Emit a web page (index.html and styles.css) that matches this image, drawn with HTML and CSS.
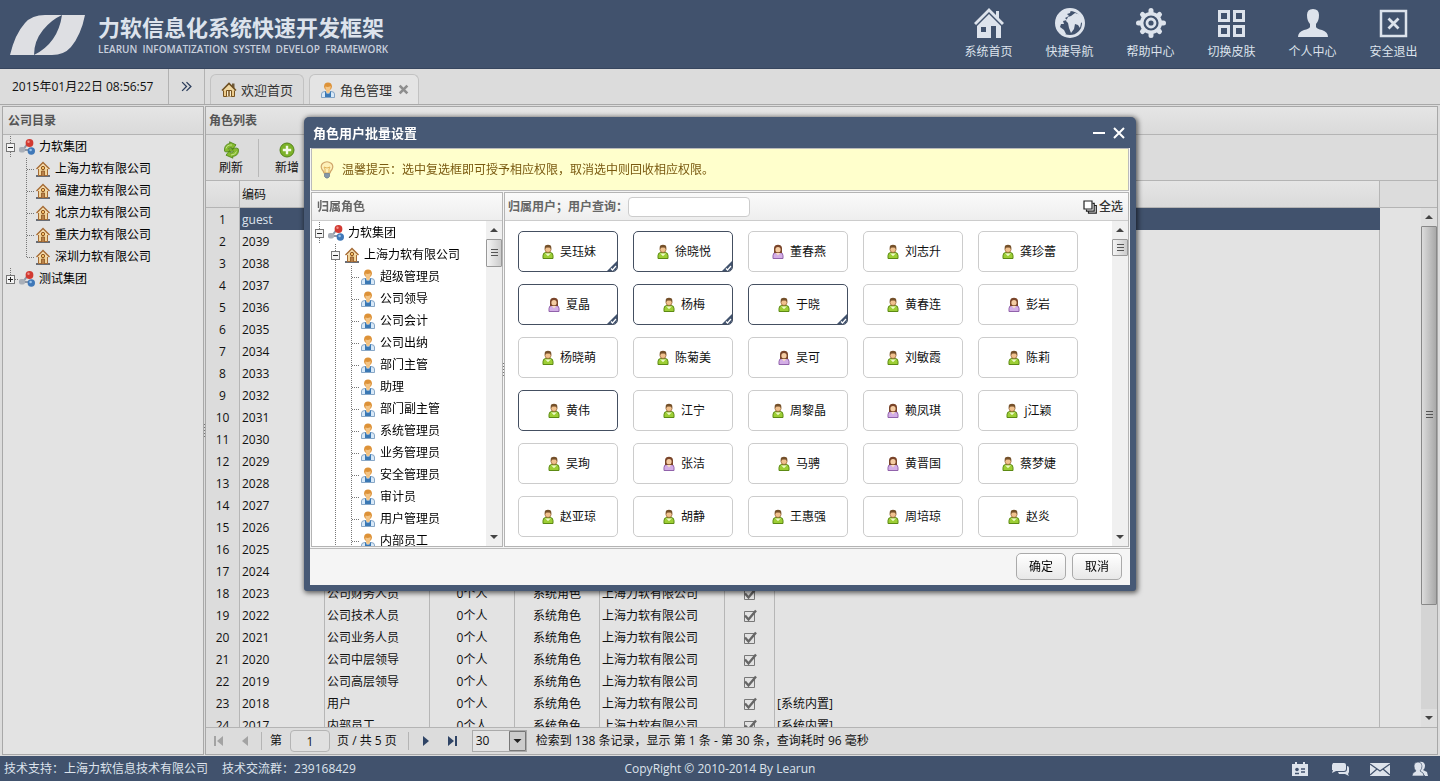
FILE: index.html
```
<!DOCTYPE html>
<html lang="zh-CN">
<head>
<meta charset="utf-8">
<title>力软信息化系统快速开发框架</title>
<link rel="stylesheet" href="styles.css">
</head>
<body>
<svg class="sprite" aria-hidden="true">
  <symbol id="i-group" viewBox="0 0 16 16"><path d="M4 11 9 4M4 11h8" stroke="#8d96a5" stroke-width="2"/><circle cx="10.500" cy="4" r="3.900" fill="#d23a32"/><circle cx="9.500" cy="2.800" r="1.200" fill="#f0928a"/><rect x="0" y="8" width="6" height="5.500" rx="2" fill="#a9afb8"/><circle cx="12.300" cy="12" r="3.700" fill="#3f78b8"/><circle cx="11.600" cy="11" r="1.300" fill="#9cc4ea"/></symbol>
  <symbol id="i-firm" viewBox="0 0 16 16"><path d="M1 15h14" stroke="#5b5f68" stroke-width="1.800"/><path d="M3.500 8v6.500h9V8" fill="#f2d49a" stroke="#a56b35"/><path d="M1.500 8 8 1.500 14.500 8" fill="#f6deb0" stroke="#a56b35" stroke-width="1.400"/><circle cx="8" cy="7" r="1.700" fill="#f6c067" stroke="#8c5420"/><path d="M6.500 14.500V10h3v4.500" fill="#b9824a" stroke="#8c5420" stroke-width=".8"/></symbol>
  <symbol id="i-home" viewBox="0 0 16 16"><path d="M11 1.500h2.500V7H11z" fill="#6e5a3a"/><path d="M2.500 8v6.500h11V8" fill="#eac98a" stroke="#77531f"/><path d="M1 8.500 8 1.500l7 7" fill="#f0d8a2" stroke="#6e4f22" stroke-width="1.600"/><path d="M5.500 14.500V8.500h5v6" fill="#f7ecd0" stroke="#77531f"/><path d="M8 9v5" stroke="#77531f" stroke-width="1.500"/></symbol>
  <symbol id="i-role" viewBox="0 0 16 16"><path d="M1.500 15.500V12Q1.500 9.500 5 9.500h6q3.500 0 3.500 2.500v3.500z" fill="#d8e9f8" stroke="#6d93ba" stroke-width=".8"/><path d="M5 9.500h1.500v2h3v-2H11v5.500H5z" fill="#3a78b4"/><path d="M6 7h4v3l-2 1.500L6 10z" fill="#f4c78a"/><circle cx="8" cy="4.300" r="3.900" fill="#dd9238"/><path d="M5.300 4.500q2.700 1 5.400-.5 0 4.500-2.700 4.500T5.300 4.500z" fill="#f4c586"/></symbol>
  <symbol id="i-man" viewBox="0 0 16 16"><path d="M3 14.500v-3Q3 8.500 6 8.500h4q3 0 3 3v3z" fill="#9dce35" stroke="#5c8a13"/><path d="M5.500 9.500 8 12l2.500-2.500" fill="#eef7ce" stroke="#d6ef96"/><circle cx="8" cy="5.500" r="3" fill="#f0c18e" stroke="#93602f" stroke-width=".7"/><path d="M4.700 5.500V3Q5 .8 8 .8t3.300 2.200v2.500L10 3.500H6z" fill="#74502a"/></symbol>
  <symbol id="i-woman" viewBox="0 0 16 16"><path d="M3 14.500v-3Q3 8.500 6 8.500h4q3 0 3 3v3z" fill="#d3aee6" stroke="#9162ab"/><path d="M4 9V4Q4.500.8 8 .8t4 3.200v5z" fill="#7a452a"/><circle cx="8" cy="5.700" r="2.600" fill="#f5cda3"/><path d="M5.800 9 8 11.500 10.200 9z" fill="#f7ddc5"/></symbol>
  <symbol id="i-refresh" viewBox="0 0 18 18"><path d="M2.500 8Q3 3 8 2.500L7.500.800l6.500 3L10.500 9 9.500 6.500Q7 6.500 6.500 8l8-1Q17 7 16.500 10 16 15 10.500 15.500l.5 1.700-7-3L7.500 9.500l1 2.500q2.500 0 3-2l-8 1Q2 10.500 2.500 8z" fill="#86ba30" stroke="#4e8418" stroke-width=".8"/><path d="M4 7.500q1-4 6-3.500M14.500 10.500q-1 3.500-5.500 3.500" fill="none" stroke="#c5e38a"/></symbol>
  <symbol id="i-add" viewBox="0 0 18 18"><circle cx="9" cy="9" r="7" fill="#7cb228" stroke="#54841a"/><path d="M9 4.800v8.400M4.800 9h8.400" stroke="#f4f8e8" stroke-width="2.400"/></symbol>
  <symbol id="i-bulb" viewBox="0 0 16 18"><path d="M5 12Q4.500 10 3 8.500 1.200 5 3.500 2.500 8-1 12.500 2.500 14.800 5 13 8.500 11.500 10 11 12z" fill="#fdf0b8" stroke="#cfa56a" stroke-width="1.200"/><path d="M6 12V8L5 6l3 1 3-1-1 2v4" fill="none" stroke="#e2b45c"/><path d="M5.500 12.500h5v3L9 17H7l-1.500-1.500z" fill="#8397a8" stroke="#68798a" stroke-width=".7"/></symbol>
  <symbol id="i-all" viewBox="0 0 14 14"><path d="M1 1h8v8H1z" fill="#fff" stroke="#222" stroke-width="1.200"/><path d="M3.500 9.500v1.700h7.700V3.300H9.500M5.500 11.500v1.700h7.800V5.500h-1.800" fill="none" stroke="#222" stroke-width="1.200"/></symbol>
</svg>

<header class="top">
  <svg class="logo" viewBox="0 0 76 42" aria-label="Learun"><path d="M0 41Q5 20 15 9 22 1 35 1H75Q71 21 61 33 54 41 42 41z" fill="#dedfe3"/><path d="M24 41Q24 27 33 16 41 6 52 1 50 15 43 25 36 35 24 41z" fill="#41526d"/></svg>
  <div class="brand">
    <h1>力软信息化系统快速开发框架</h1>
    <p>LEARUN&nbsp; INFOMATIZATION&nbsp; SYSTEM&nbsp; DEVELOP&nbsp; FRAMEWORK</p>
  </div>
  <nav class="quick">
    <a href="#"><svg viewBox="0 0 30 30"><path d="M15 0 0 15l2 2L15 4l13 13 2-2-5-5V3h-3v4z"/><path d="M15 6 3 18v12h14V18h5v12h5V18zM7 19h5v5H7z" fill-rule="evenodd"/></svg>系统首页</a>
    <a href="#"><svg viewBox="0 0 30 30"><circle cx="15" cy="15" r="13.500" fill="none" stroke="#dde3ec" stroke-width="3"/><path d="M2 8 9 2l7 0-1 3-3 1 2 2-4 2 2 2-4 1 1 3-3 0-1 3 4 3 2 4-2 1-6-6zM16 8l4-3 6 2 3 6-3 2-1 5-2-3-3-1-1 5-3 4-2-5-1-5-2-2 2-4z"/></svg>快捷导航</a>
    <a href="#"><svg viewBox="0 0 30 30"><g stroke="#dde3ec" stroke-width="5" stroke-linecap="round"><path d="M15 2.500v25M2.500 15h25M6.500 6.500l17 17M23.500 6.500l-17 17"/></g><circle cx="15" cy="15" r="11"/><circle cx="15" cy="15" r="6.500" fill="#dde3ec" stroke="#41526d" stroke-width="2.200"/><circle cx="15" cy="15" r="2.600" fill="#41526d"/></svg>帮助中心</a>
    <a href="#"><svg viewBox="0 0 30 30"><g fill="none" stroke="#dde3ec" stroke-width="3"><path d="M2.500 3.500h9v9h-9zM17.500 3.500h9v9h-9zM2.500 18.500h9v9h-9zM17.500 18.500h9v9h-9z"/></g></svg>切换皮肤</a>
    <a href="#"><svg viewBox="0 0 30 30"><path d="M9 7q0-6 6-6t6 6q0 6-3 9v3q1 2 6 3 6 2 6 7H0q0-5 6-7 5-1 6-3v-3Q9 13 9 7z"/></svg>个人中心</a>
    <a href="#"><svg viewBox="0 0 30 30"><path d="M2 3h25v25H2z" fill="none" stroke="#dde3ec" stroke-width="2.500"/><path d="m9.500 10.500 10 10m0-10-10 10" stroke="#dde3ec" stroke-width="2.800"/></svg>安全退出</a>
  </nav>
</header>

<div class="tabbar">
  <time class="clock">2015年01月22日 08:56:57</time>
  <button class="expand" aria-label="展开"><svg viewBox="0 0 10 10"><path d="m1 1 4 4-4 4M5 1l4 4-4 4" fill="none" stroke="#2c3e5c" stroke-width="1.200"/></svg></button>
  <div class="tabs">
    <a class="tab" href="#"><svg class="ic"><use href="#i-home"/></svg>欢迎首页</a>
    <a class="tab active" href="#"><svg class="ic"><use href="#i-role"/></svg>角色管理<svg class="close" viewBox="0 0 10 10"><path d="m1.500 1.500 7 7m0-7-7 7" stroke="#8e8e8e" stroke-width="2.400"/></svg></a>
  </div>
</div>

<main class="work">
  <aside class="panel side">
    <h2 class="caption">公司目录</h2>
    <ul class="tree" id="companyTree"></ul>
  </aside>
  <div class="splitter"><i class="grip"></i></div>
  <section class="panel content">
    <h2 class="caption near">角色列表</h2>
    <div class="toolbar">
      <button><svg><use href="#i-refresh"/></svg>刷新</button>
      <button><svg><use href="#i-add"/></svg>新增</button>
    </div>
    <div class="grid">
      <table>
        <colgroup><col class="c-no"><col class="c-std"><col class="c-name"><col class="c-std"><col class="c-std"><col class="c-firm"><col class="c-on"><col><col class="c-end"></colgroup>
        <thead><tr><th></th><th>编码</th><th></th><th></th><th></th><th></th><th></th><th></th><th></th></tr></thead>
        <tbody id="roleRows"></tbody>
      </table>
      <div class="scroll main-scroll" aria-hidden="true"><i class="up"></i><i class="thumb"></i><i class="down"></i></div>
    </div>
    <div class="pager">
      <button aria-label="首页" class="off"><svg viewBox="0 0 12 12"><path d="M1 1h2v10H1zM10 1v10L4 6z"/></svg></button>
      <button aria-label="上一页" class="off"><svg viewBox="0 0 12 12"><path d="M9 1v10L3 6z"/></svg></button>
      <i class="sep"></i>
      <label for="page">第</label><input id="page" value="1"><span>页 / 共 5 页</span>
      <i class="sep"></i>
      <button aria-label="下一页"><svg viewBox="0 0 12 12"><path d="M3 1v10l6-5z"/></svg></button>
      <button aria-label="末页"><svg viewBox="0 0 12 12"><path d="M2 1v10l6-5zM9 1h2v10H9z"/></svg></button>
      <select aria-label="每页条数"><option>30</option></select>
      <span>检索到 138 条记录，显示 第 1 条 - 第 30 条，查询耗时 96 毫秒</span>
    </div>
  </section>
</main>

<footer class="status">
  <div class="support"><span>技术支持<b class="colon">：</b>上海力软信息技术有限公司</span><span>技术交流群<b class="colon">：</b>239168429</span></div>
  <div>CopyRight © 2010-2014 By Learun</div>
  <div class="tray">
    <a href="#" aria-label="日历"><svg viewBox="0 0 20 16"><path d="M3 3h2V1h2v2h6V1h2v2h3v12H2V3z"/><path d="M5 12.500h4M11 8h4m-4 3h4" stroke="#41526d" stroke-width="1.400"/><circle cx="7" cy="8.500" r="1.800" fill="#41526d"/></svg></a>
    <a href="#" aria-label="消息"><svg viewBox="0 0 20 16"><path d="M3 2h11q2 0 2 2v4q0 2-2 2H6l-4 2 1-3H2V4z"/><path d="M17 5q2 0 2 2v4l-1 2 1 2-4-2H9l-1-2h6q3 0 3-3z"/></svg></a>
    <a href="#" aria-label="邮件"><svg viewBox="0 0 20 16"><path d="M0 2h20v13H0z"/><path d="m0 3 10 7 10-7M0 14l7-6m13 6-7-6" fill="none" stroke="#41526d" stroke-width="1.300"/></svg></a>
    <a href="#" aria-label="用户"><svg viewBox="0 0 20 16"><path d="M9 1q5-1 6 3 0 4-2 5l4 2 1 4h-3l-2-3-3-2q4-5-1-9z"/><path d="M4 5q0-4 4-4t4 4q0 3-2 5l3 2 1 3H2l1-3 3-2Q4 8 4 5z" stroke="#41526d" stroke-width=".6"/></svg></a>
  </div>
</footer>

<div class="overlay">
  <section class="dialog" role="dialog" aria-labelledby="dlgTitle">
    <header class="dlg-head">
      <h2 id="dlgTitle">角色用户批量设置</h2>
      <button aria-label="最小化"><svg viewBox="0 0 14 14"><path d="M1 7h12" stroke="#fff" stroke-width="2"/></svg></button>
      <button aria-label="关闭"><svg viewBox="0 0 14 14"><path d="m2 2 10 10m0-10L2 12" stroke="#fff" stroke-width="2"/></svg></button>
    </header>
    <div class="dlg-body">
      <p class="tip"><svg><use href="#i-bulb"/></svg><span>温馨提示<b class="colon">：</b>选中复选框即可授予相应权限，取消选中则回收相应权限。</span></p>
      <div class="split">
        <div class="pane roles">
          <h3 class="pane-head">归属角色</h3>
          <div class="pane-body">
            <ul class="tree" id="roleTree"></ul>
            <div class="scroll role-scroll" aria-hidden="true"><i class="up"></i><i class="thumb"></i><i class="down"></i></div>
          </div>
        </div>
        <div class="splitter"><i class="grip"></i></div>
        <div class="pane users">
          <div class="pane-head search"><label for="q">归属用户<b class="colon">；</b>用户查询<b class="colon">：</b></label><input id="q"><button><svg><use href="#i-all"/></svg>全选</button></div>
          <div class="pane-body">
            <div class="cards" id="userCards"></div>
            <div class="scroll user-scroll" aria-hidden="true"><i class="up"></i><i class="thumb"></i><i class="down"></i></div>
          </div>
        </div>
      </div>
      <div class="actions"><button>确定</button><button>取消</button></div>
    </div>
  </section>
</div>
<script src="app.js"></script>
</body>
</html>
```
FILE: styles.css
```
* { box-sizing: border-box; }
body { margin: 0; height: 100vh; display: flex; flex-direction: column; overflow: hidden; background: #dcdcdc; color: #111; font: 12px/20px "Open Sans", "Noto Sans CJK SC", sans-serif; }
h1, h2, h3, p, ul { margin: 0; padding: 0; }
ul { list-style: none; }
a { color: inherit; text-decoration: none; }
button, input, select { font: inherit; color: inherit; margin: 0; padding: 0; }
button { border: 0; background: none; }
svg { display: block; flex: none; }
.sprite { position: absolute; width: 0; height: 0; }
.ic { width: 16px; height: 16px; }
.colon { font-family: "Noto Sans CJK TC", sans-serif; font-weight: inherit; line-height: 1; }

.top { flex: none; display: flex; align-items: flex-start; height: 69px; padding: 0 6px 0 10px; background: #41526d; border-bottom: 1px solid #36455e; color: #dde3ec; }
.logo { width: 76px; height: 42px; margin-top: 14px; }
.brand { margin: 12px 0 0 12px; white-space: nowrap; }
.brand h1 { font-size: 22px; line-height: 30px; font-weight: 700; }
.brand p { font-size: 10px; line-height: 14px; font-weight: 600; color: #c9d0dd; }
.quick { display: flex; margin-left: auto; padding-top: 8px; }
.quick a { width: 81px; display: flex; flex-direction: column; align-items: center; gap: 4px; }
.quick svg { width: 30px; height: 30px; fill: #dde3ec; }

.tabbar { flex: none; display: flex; height: 36px; border-bottom: 1px solid #a8a8a8; background: #dcdcdc; }
.clock { width: 169px; padding-left: 12px; line-height: 35px; border-right: 1px solid #b2b2b2; }
.expand { width: 36px; display: flex; align-items: center; justify-content: center; border-right: 1px solid #b2b2b2; }
.expand svg { width: 11px; height: 11px; }
.tabs { display: flex; align-items: flex-end; gap: 5px; padding-left: 5px; }
.tab { height: 30px; display: flex; align-items: center; padding: 0 10px; border: 1px solid #c2c2c2; border-bottom: 0; border-radius: 6px 6px 0 0; font-size: 13px; background: #dadada; color: #333; }
.tab .ic { margin-right: 4px; }
.tab.active { background: #e4e4e4; padding-right: 9px; }
.tab .close { width: 11px; height: 11px; margin-left: 6px; }

.work { flex: 1; min-height: 0; display: flex; padding: 1px 2px 0; }
.panel { display: flex; flex-direction: column; min-height: 0; border: 1px solid #a8a8a8; background: #e3e3e3; }
.side { width: 202px; }
.content { flex: 1; min-width: 0; }
.caption { flex: none; height: 28px; padding-left: 5px; font-size: 12px; line-height: 27px; font-weight: 700; color: #555; border-bottom: 1px solid #b4b4b4; background: linear-gradient(#e5e5e5, #dadada); }
.caption.near { padding-left: 3px; }
.splitter { width: 1px; display: flex; align-items: center; justify-content: center; }
.grip { flex: none; width: 2px; height: 14px; background: repeating-linear-gradient(#777 0 1px, transparent 1px 3px); }

.tree { padding-top: 1px; flex: 1; min-width: 0; }
.tree li { display: flex; align-items: center; height: 22px; white-space: nowrap; color: #000; }
.tree .ic { margin-right: 4px; }
.tree .cell { flex: none; width: 16px; height: 22px; display: flex; align-items: center; padding-left: 3px; }
.tree .line, .tree .root { background: repeating-linear-gradient(#777 0 1px, transparent 1px 2px) 7px 0 / 1px 100% no-repeat; }
.tree .branch { background: repeating-linear-gradient(#777 0 1px, transparent 1px 2px) 7px 0 / 1px 100% no-repeat, repeating-linear-gradient(90deg, #777 0 1px, transparent 1px 2px) 8px 11px / 8px 1px no-repeat; }
.tree .branch.end { background-size: 1px 12px, 8px 1px; }
.tree .box { width: 9px; height: 9px; border: 1px solid #777; background: linear-gradient(#222, #222) center / 5px 1px no-repeat #f4f4f4; }
.tree .box.plus { background: linear-gradient(#222, #222) center / 5px 1px no-repeat, linear-gradient(#222, #222) center / 1px 5px no-repeat #f4f4f4; }

.toolbar { flex: none; display: flex; align-items: center; height: 46px; border-bottom: 1px solid #b4b4b4; background: #dcdcdc; }
.toolbar button { width: 56px; height: 38px; display: flex; flex-direction: column; align-items: center; padding-top: 2px; line-height: 18px; }
.toolbar button:first-child { width: 53px; padding-right: 2px; border-right: 1px solid #b8b8b8; }
.toolbar svg { width: 18px; height: 18px; }

.grid { flex: 1; min-height: 0; position: relative; overflow: hidden; }
.grid table { width: 100%; table-layout: fixed; border-collapse: separate; border-spacing: 0; }
.c-no { width: 34px; } .c-std { width: 85px; } .c-name { width: 105px; } .c-firm { width: 125px; } .c-on { width: 50px; } .c-end { width: 57px; }
.grid th, .grid td { padding: 2px 0 0 2px; border-right: 1px solid #b6b6b6; text-align: left; white-space: nowrap; overflow: hidden; font-weight: 400; }
.grid th { height: 27px; border-bottom: 1px solid #b4b4b4; background: linear-gradient(#e5e5e5, #dadada); }
.grid td { height: 22px; line-height: 20px; }
.grid td:first-child { padding-left: 0; text-align: center; background: #dcdcdc; }
.grid th:last-child, .grid td:last-child { border-right: 0; }
.grid th:last-child { background: #dcdcdc; }
.grid td.mid { text-align: center; padding-left: 0; }
.grid tr.on td:not(:first-child):not(:last-child) { background: #41526d; color: #dde3ec; border-right-color: #41526d; }
.tick { appearance: none; display: block; width: 14px; height: 14px; margin: 0 auto; background: url("data:image/svg+xml,%3Csvg xmlns='http://www.w3.org/2000/svg' viewBox='0 0 14 14'%3E%3Cpath d='M1.500 2.500h10v10h-10z' fill='none' stroke='%23777'/%3E%3Cpath d='M2 6.500l3.500 4L13 1.500' fill='none' stroke='%23666' stroke-width='2.400'/%3E%3C/svg%3E"); }

.scroll { width: 16px; display: flex; flex-direction: column; background: #f0f0f0; }
.scroll .up, .scroll .down { flex: none; height: 18px; display: flex; align-items: center; justify-content: center; }
.scroll .up::before, .scroll .down::before { content: ""; border: 4px solid transparent; border-top-width: 0; border-bottom: 4px solid #444; }
.scroll .down { margin-top: auto; }
.scroll .down::before { border-top: 4px solid #444; border-bottom-width: 0; }
.scroll .thumb { flex: none; display: flex; align-items: center; justify-content: center; border: 1px solid #999; border-radius: 1px; background: linear-gradient(90deg, #f4f4f4, #ccc); }
.scroll .thumb::before { content: ""; width: 7px; height: 8px; background: repeating-linear-gradient(#555 0 1px, transparent 1px 3px); }
.main-scroll { position: absolute; top: 27px; right: 0; bottom: 0; background: #d4d4d4; }
.main-scroll .up, .main-scroll .down { background: #dedede; }
.main-scroll .thumb { height: 73%; background: linear-gradient(90deg, #dcdcdc, #a8a8a8); border-color: #888; }

.pager { flex: none; display: flex; align-items: center; height: 27px; padding-left: 7px; border-top: 1px solid #b4b4b4; background: #dcdcdc; white-space: nowrap; }
.pager button { width: 12px; margin-right: 14px; }
.pager button svg { width: 12px; height: 12px; fill: #2f4466; }
.pager .off svg { fill: #a3a3a3; }
.pager .sep { width: 1px; height: 18px; margin: 0 8px 0 -4px; background: #b4b4b4; }
.pager input { width: 40px; height: 22px; margin: 0 7px 0 8px; border: 1px solid #b4b4b4; border-radius: 4px; background: #e0e0e0; text-align: center; }
.pager span + .sep { margin: 0 11px; }
.pager select { appearance: none; width: 55px; height: 22px; margin: 0 9px 0 0; padding-left: 3px; border: 1px solid #aaa; border-radius: 0; background: url("data:image/svg+xml,%3Csvg xmlns='http://www.w3.org/2000/svg' viewBox='0 0 17 20'%3E%3Cpath d='M.5.500h16v19H.5z' fill='%23ccc' stroke='%23777'/%3E%3Cpath d='M4.500 8h8l-4 4z' fill='%23222'/%3E%3C/svg%3E") right center / 17px 20px no-repeat #e3e3e3; }

.status { flex: none; display: grid; grid-template-columns: 1fr auto 1fr; align-items: center; height: 25px; margin-top: 1px; padding: 0 4px; background: #41526d; color: #dde3ec; }
.support { display: flex; gap: 14px; }
.tray { display: flex; justify-content: flex-end; gap: 20px; padding-right: 6px; }
.tray svg { width: 20px; height: 16px; fill: #dde3ec; }

.overlay { position: fixed; inset: 0; display: flex; align-items: flex-start; justify-content: center; padding-top: 117px; }
.dialog { width: 832px; padding: 0 6px 6px; border-radius: 5px 5px 3px 3px; background: #475975; box-shadow: 1px 1px 5px 1px rgba(0, 0, 0, .6); }
.dlg-head { display: flex; align-items: center; height: 31px; gap: 6px; padding: 0 4px 0 3px; color: #fff; }
.dlg-head h2 { flex: 1; font-size: 13px; font-weight: 700; }
.dlg-head button { width: 14px; height: 14px; }
.dlg-body { background: #f5f5f5; }
.tip { display: flex; align-items: center; gap: 7px; height: 43px; margin: 0 1px; padding-left: 7px; border: 1px solid #bbb; background: #ffc; color: #7a5a10; }
.tip svg { width: 16px; height: 18px; }
.split { display: flex; height: 356px; padding: 1px 1px 0; }
.pane { display: flex; flex-direction: column; border: 1px solid #b4b4b4; background: #fff; }
.roles { width: 192px; }
.users { flex: 1; min-width: 0; }
.pane-head { flex: none; display: flex; align-items: center; height: 28px; padding-left: 5px; font-size: 12px; font-weight: 700; color: #666; border-bottom: 1px solid #ccc; background: linear-gradient(#fafafa, #eee); }
.pane-head.search { padding: 0 5px 0 3px; }
.pane-head input { width: 122px; height: 20px; padding: 0 4px; border: 1px solid #ccc; border-radius: 4px; background: #fff; }
.pane-head button { display: flex; align-items: center; gap: 2px; margin-left: auto; font-weight: 500; color: #333; }
.pane-head button svg { width: 14px; height: 14px; }
.pane-body { flex: 1; min-height: 0; display: flex; overflow: hidden; }
.role-scroll .thumb { height: 28px; }
.user-scroll .thumb { height: 17px; }
.cards { flex: 1; display: grid; grid-template-columns: repeat(5, 100px); grid-auto-rows: 41px; gap: 12px 15px; padding: 10px 0 0 13px; }
.card { position: relative; display: flex; align-items: center; justify-content: center; gap: 4px; border: 1px solid #ccc; border-radius: 5px; background: #fff; color: #111; overflow: hidden; }
.card.dark { border-color: #444f61; }
.card .mark { position: absolute; right: 0; bottom: 0; width: 10px; height: 10px; }
.actions { display: flex; justify-content: flex-end; gap: 6px; padding: 4px 8px; border-top: 1px solid #bbb; height: 37px; margin-top: 1px; }
.actions button { width: 50px; height: 27px; border: 1px solid #aaa; border-radius: 5px; background: linear-gradient(#fff, #e8e8e8); color: #000; }
```
FILE: app.js
```
const icon = (name) => `<svg class="ic"><use href="#i-${name}"/></svg>`;
const cell = (kind, inner = '') => `<span class="cell ${kind}">${inner}</span>`;
const minus = '<i class="box"></i>';
const plus = '<i class="box plus"></i>';
const row = (cells, name, text) => `<li>${cells}${icon(name)}${text}</li>`;

const firms = ['上海', '福建', '北京', '重庆', '深圳'];
document.getElementById('companyTree').innerHTML =
  row(cell('root', minus), 'group', '力软集团') +
  firms.map((f, i) => row(cell('') + cell(i === firms.length - 1 ? 'branch end' : 'branch'), 'firm', f + '力软有限公司')).join('') +
  row(cell('branch end', plus), 'group', '测试集团');

const roles = ['超级管理员', '公司领导', '公司会计', '公司出纳', '部门主管', '助理', '部门副主管', '系统管理员', '业务管理员', '安全管理员', '审计员', '用户管理员', '内部员工'];
document.getElementById('roleTree').innerHTML =
  row(cell('root', minus), 'group', '力软集团') +
  row(cell('') + cell('line', minus), 'firm', '上海力软有限公司') +
  roles.map((r) => row(cell('') + cell('line') + cell('branch'), 'role', r)).join('');

// f = female icon, s = selected, h = highlighted border
const users = [
  ['吴珏妹', 's'], ['徐晓悦', 's'], ['董春燕', 'f'], ['刘志升', ''], ['龚珍蕾', ''],
  ['夏晶', 'fs'], ['杨梅', 's'], ['于晓', 's'], ['黄春连', ''], ['彭岩', 'f'],
  ['杨晓萌', ''], ['陈菊美', ''], ['吴可', 'f'], ['刘敏霞', ''], ['陈莉', ''],
  ['黄伟', 'h'], ['江宁', ''], ['周黎晶', ''], ['赖凤琪', 'f'], ['j江颖', ''],
  ['吴珣', ''], ['张洁', 'f'], ['马骋', ''], ['黄晋国', 'f'], ['蔡梦婕', ''],
  ['赵亚琼', ''], ['胡静', ''], ['王惠强', ''], ['周培琼', ''], ['赵炎', '']
];
const mark = '<svg class="mark" viewBox="0 0 10 10"><path d="M10 0v10H0z" fill="#41526d"/><path d="m4 7.500 1.500 1.500L9 5" fill="none" stroke="#fff" stroke-width="1.200"/></svg>';
document.getElementById('userCards').innerHTML = users.map(([name, f]) => {
  const on = f.includes('s');
  return `<button class="card${on || f === 'h' ? ' dark' : ''}" aria-pressed="${on}">${icon(f.includes('f') ? 'woman' : 'man')}${name}${on ? mark : ''}</button>`;
}).join('');

const names = { 18: '公司财务人员', 19: '公司技术人员', 20: '公司业务人员', 21: '公司中层领导', 22: '公司高层领导', 23: '用户', 24: '内部员工' };
let html = '';
for (let n = 1; n <= 24; n++) {
  const known = names[n];
  html += `<tr${n === 1 ? ' class="on"' : ''}><td>${n}</td><td>${n === 1 ? 'guest' : 2041 - n}</td>` +
    (known
      ? `<td>${known}</td><td class="mid">0个人</td><td class="mid">系统角色</td><td>上海力软有限公司</td><td class="mid"><input type="checkbox" class="tick" aria-label="有效" checked></td><td>${n > 22 ? '[系统内置]' : ''}</td>`
      : '<td></td><td></td><td></td><td></td><td></td><td></td>') +
    '<td></td></tr>';
}
document.getElementById('roleRows').innerHTML = html;
```
